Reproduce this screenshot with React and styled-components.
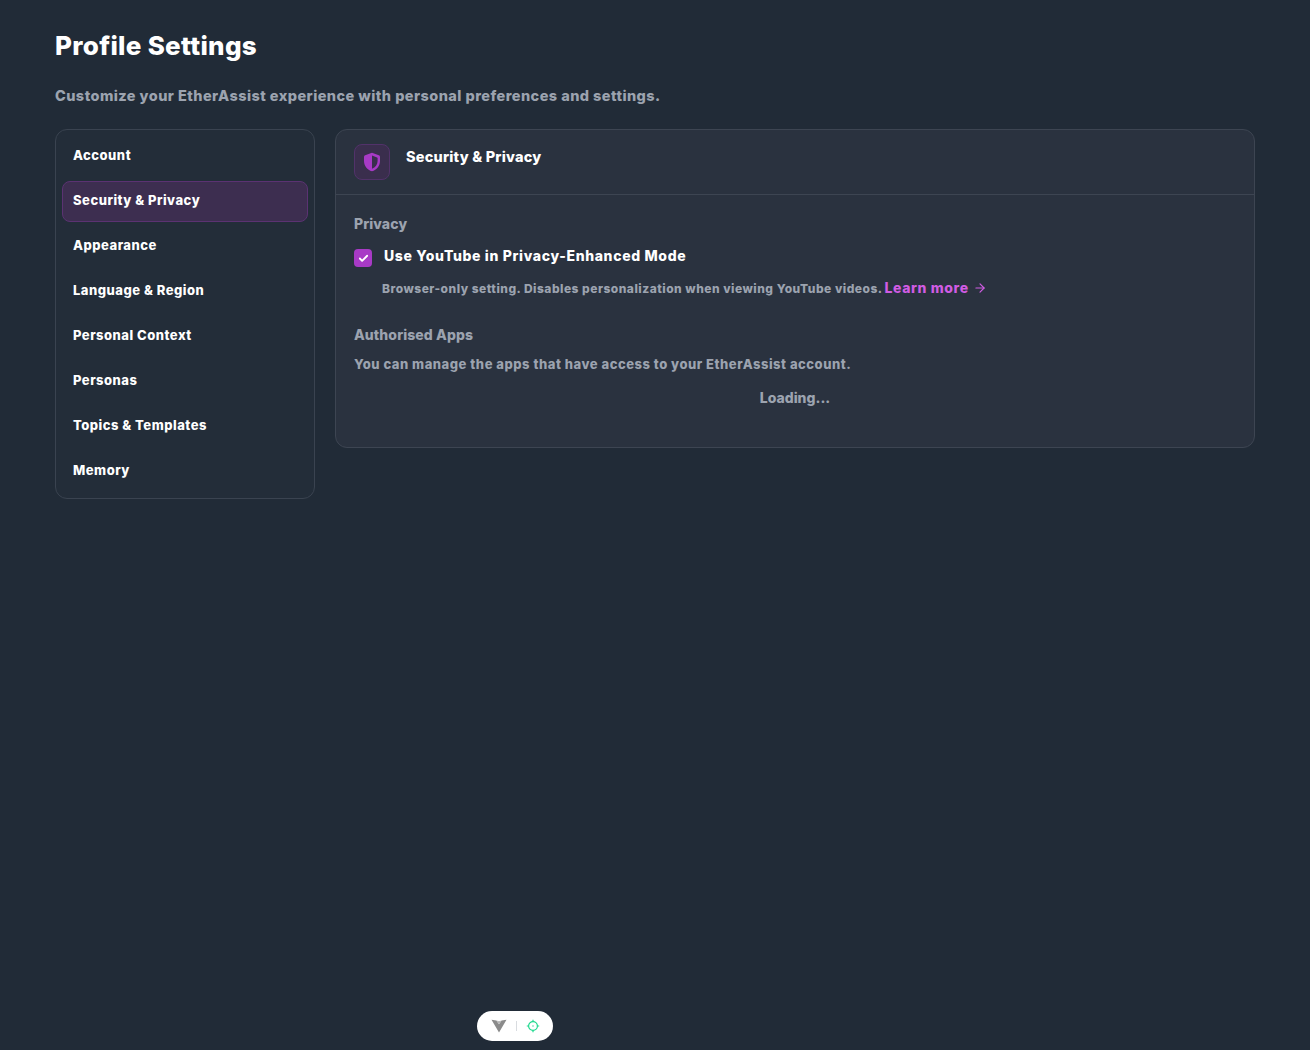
import React from 'react';
import styled, { createGlobalStyle } from 'styled-components';
import { ArrowRight, Check } from 'lucide-react';

const GlobalStyle = createGlobalStyle`
  html, body {
    margin: 0;
    padding: 0;
    height: 100%;
    background: #212b37;
  }
  body {
    font-family: Inter, "Liberation Sans", sans-serif;
    font-weight: 800;
    color: #fff;
  }
`;

const Page = styled.main`
  box-sizing: border-box;
  height: 1050px;
  padding: 28px 55px 0;
  overflow: hidden;
`;

const Title = styled.h1`
  margin: 0;
  font-size: 26px;
  line-height: 36px;
  font-weight: 800;
  letter-spacing: 0.3px;
`;

const Subtitle = styled.p`
  margin: 21px 0 0;
  font-size: 14.5px;
  line-height: 22px;
  letter-spacing: 0.44px;
  color: #9ca3af;
`;

const Columns = styled.div`
  display: flex;
  align-items: flex-start;
  gap: 20px;
  margin-top: 22px;
`;

const Sidebar = styled.nav`
  box-sizing: border-box;
  flex: 0 0 260px;
  display: flex;
  flex-direction: column;
  gap: 4px;
  padding: 6px;
  border: 1px solid #3a4350;
  border-radius: 12px;
  background: #232d39;
`;

const NavItem = styled.a`
  box-sizing: border-box;
  height: 41px;
  display: flex;
  align-items: center;
  padding: 0 10px 3px;
  font-size: 13px;
  letter-spacing: 0.5px;
  border-radius: 8px;
  border: 1px solid ${({ $active }) => ($active ? '#5b3272' : 'transparent')};
  background: ${({ $active }) => ($active ? '#3d2e50' : 'transparent')};
  color: #fff;
`;

const Panel = styled.section`
  box-sizing: border-box;
  flex: 0 0 920px;
  height: 319px;
  border: 1px solid #3d4552;
  border-radius: 12px;
  background: #2a323f;
`;

const PanelHeader = styled.header`
  box-sizing: border-box;
  height: 65px;
  display: flex;
  align-items: flex-start;
  gap: 16px;
  padding: 14px 18px 0;
  border-bottom: 1px solid #3d4552;
`;

const IconTile = styled.div`
  box-sizing: border-box;
  width: 36px;
  height: 36px;
  display: flex;
  align-items: center;
  justify-content: center;
  border: 1px solid #52326a;
  border-radius: 8px;
  background: #3a2e4d;
`;

const PanelTitle = styled.h2`
  margin: 0;
  font-size: 14.5px;
  line-height: 26px;
  font-weight: 800;
  letter-spacing: 0.2px;
`;

const PanelBody = styled.div`
  padding: 20px 18px 0;
`;

const SectionTitle = styled.h3`
  margin: ${({ $spaced }) => ($spaced ? '27px' : '0')} 0 0;
  font-size: 14px;
  line-height: 18px;
  font-weight: 800;
  letter-spacing: 0.1px;
  color: #9ca3af;
`;

const CheckRow = styled.label`
  display: flex;
  align-items: center;
  gap: 12px;
  margin-top: 13px;
  font-size: 14px;
  line-height: 20px;
  letter-spacing: 0.65px;
`;

const CheckBox = styled.span`
  width: 18px;
  height: 18px;
  display: flex;
  align-items: center;
  justify-content: center;
  border-radius: 4px;
  background: #a83ac6;
  color: #fff;
  transform: translateY(2px);
`;

const HelpText = styled.p`
  margin: 12px 0 0 28px;
  font-size: 12px;
  line-height: 20px;
  letter-spacing: 0.49px;
  color: #9ca3af;
`;

const LearnMore = styled.a`
  display: inline-flex;
  align-items: center;
  gap: 4px;
  margin-left: 2px;
  font-size: 14px;
  letter-spacing: 0.6px;
  color: #d05ce3;
`;

const MutedLine = styled.p`
  margin: 10px 0 0;
  font-size: 13px;
  line-height: 20px;
  letter-spacing: 0.52px;
  color: #9ca3af;
`;

const Loading = styled.div`
  margin-top: 14px;
  text-align: center;
  font-size: 14px;
  line-height: 20px;
  color: #9ca3af;
`;

const DevPill = styled.div`
  position: fixed;
  left: 477px;
  top: 1011px;
  width: 76px;
  height: 30px;
  display: flex;
  align-items: center;
  justify-content: center;
  gap: 9px;
  border-radius: 15px;
  background: #fff;
`;

const PillDivider = styled.span`
  width: 1px;
  height: 10px;
  background: #d9dce0;
`;

const ShieldIcon = () => (
  <svg width="24" height="24" viewBox="0 0 24 24" aria-hidden="true">
    <path
      fill="#a83ac6"
      fillRule="evenodd"
      d="M12 2.7 5.2 5.2Q4 5.6 4 6.9V11c0 5 3.3 8.8 8 10.3 4.7-1.5 8-5.3 8-10.3V6.9Q20 5.6 18.8 5.2ZM12 5.6l5 1.8q.6.2.6.8V11c0 3.5-2.2 6.3-5.6 7.7Z"
    />
  </svg>
);

const ViteMark = () => (
  <svg width="16" height="14" viewBox="0 0 16 14" aria-hidden="true">
    <path fill="#8b8b8b" d="M0.5 0.8 5.4 1.6 8 5.2 10.6 1.6 15.5 0.8 8 13.5Z" />
    <path fill="#b5b5b5" d="M5.4 1.6 8 2.2 10.6 1.6 8 5.2Z" />
  </svg>
);

const TargetIcon = () => (
  <svg width="14" height="14" viewBox="0 0 14 14" fill="none" stroke="#22d98f" strokeWidth="1.2" aria-hidden="true">
    <circle cx="7" cy="7" r="4.4" />
    <circle cx="7" cy="7" r="0.7" fill="#22d98f" stroke="none" />
    <path d="M7 0.8v2M7 11.2v2M0.8 7h2M11.2 7h2" />
  </svg>
);

const navItems = [
  'Account',
  'Security & Privacy',
  'Appearance',
  'Language & Region',
  'Personal Context',
  'Personas',
  'Topics & Templates',
  'Memory',
];

export default function App() {
  return (
    <>
      <GlobalStyle />
      <Page>
        <Title>Profile Settings</Title>
        <Subtitle>Customize your EtherAssist experience with personal preferences and settings.</Subtitle>
        <Columns>
          <Sidebar>
            {navItems.map((item) => (
              <NavItem key={item} $active={item === 'Security & Privacy'}>
                {item}
              </NavItem>
            ))}
          </Sidebar>
          <Panel>
            <PanelHeader>
              <IconTile>
                <ShieldIcon />
              </IconTile>
              <PanelTitle>Security &amp; Privacy</PanelTitle>
            </PanelHeader>
            <PanelBody>
              <SectionTitle>Privacy</SectionTitle>
              <CheckRow>
                <CheckBox>
                  <Check size={11} strokeWidth={4} />
                </CheckBox>
                Use YouTube in Privacy-Enhanced Mode
              </CheckRow>
              <HelpText>
                Browser-only setting. Disables personalization when viewing YouTube videos.
                <LearnMore>
                  {' '}Learn more <ArrowRight size={14} strokeWidth={2} />
                </LearnMore>
              </HelpText>
              <SectionTitle $spaced>Authorised Apps</SectionTitle>
              <MutedLine>You can manage the apps that have access to your EtherAssist account.</MutedLine>
              <Loading>Loading...</Loading>
            </PanelBody>
          </Panel>
        </Columns>
      </Page>
      <DevPill>
        <ViteMark />
        <PillDivider />
        <TargetIcon />
      </DevPill>
    </>
  );
}
